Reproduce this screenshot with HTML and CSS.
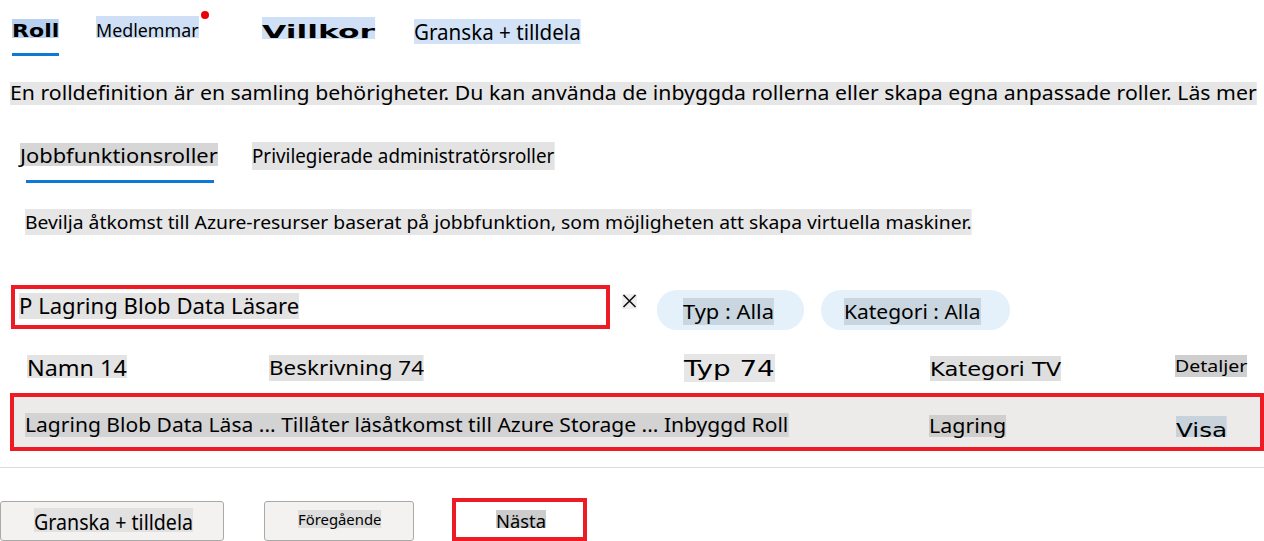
FILE: index.html
```html
<!DOCTYPE html>
<html lang="sv">
<head>
<meta charset="utf-8">
<title>Lägg till rolltilldelning</title>
<link rel="stylesheet" href="styles.css">
</head>
<body>
<main class="page">
  <nav class="tabs">
    <div class="tab tab-active"><span class="hl t-roll">Roll</span></div>
    <div class="tab tab-badge"><span class="hl t-med">Medlemmar</span><span class="dot"></span></div>
    <div class="tab"><span class="hl t-vill">Villkor</span></div>
    <div class="tab"><span class="hl t-gran">Granska + tilldela</span></div>
  </nav>

  <div class="intro"><span class="hl t-intro">En rolldefinition är en samling behörigheter. Du kan använda de inbyggda rollerna eller skapa egna anpassade roller. Läs mer</span></div>

  <div class="subtabs">
    <div class="subtab subtab-active"><span class="hl t-job">Jobbfunktionsroller</span></div>
    <div class="subtab"><span class="hl t-priv">Privilegierade administratörsroller</span></div>
  </div>

  <div class="subdesc"><span class="hl t-bev">Bevilja åtkomst till Azure-resurser baserat på jobbfunktion, som möjligheten att skapa virtuella maskiner.</span></div>

  <div class="filters">
    <div class="search"><span class="hl t-search">P Lagring Blob Data Läsare</span></div>
    <span class="clear" aria-label="Rensa"><svg width="15" height="14" viewBox="0 0 15 14"><path d="M1.5 1 L13.5 13 M13.5 1 L1.5 13" stroke="#111" stroke-width="1.6" fill="none"/></svg></span>
    <div class="pill pill-typ"><span class="hl t-pill">Typ : Alla</span></div>
    <div class="pill pill-kat"><span class="hl t-pill2">Kategori : Alla</span></div>
  </div>

  <div class="thead">
    <span class="hl t-namn">Namn 14</span>
    <span class="hl t-besk">Beskrivning 74</span>
    <span class="hl t-typ74">Typ 74</span>
    <span class="hl t-kattv">Kategori TV</span>
    <span class="hl t-det">Detaljer</span>
  </div>

  <div class="trow">
    <span class="hl t-rowtxt">Lagring Blob Data Läsa ... Tillåter läsåtkomst till Azure Storage ... Inbyggd Roll</span>
    <span class="hl t-lag">Lagring</span>
    <span class="hl t-visa">Visa</span>
  </div>

  <div class="sep"></div>

  <div class="actions">
    <button class="btn btn-review"><span class="hl t-bg">Granska + tilldela</span></button>
    <button class="btn btn-prev"><span class="hl t-bf">Föregående</span></button>
    <button class="btn btn-next"><span class="hl t-bn">Nästa</span></button>
  </div>
</main>
</body>
</html>
```
FILE: styles.css
```css
html, body { margin: 0; padding: 0; background: #fff; }
body {
  font-family: "Noto Sans", sans-serif;
  color: #000;
  width: 1264px;
  height: 541px;
  overflow: hidden;
}
.page { display: flex; flex-direction: column; }

.hl {
  display: block;
  width: max-content;
  white-space: nowrap;
  transform-origin: left top;
  transform: scaleX(var(--sx, 1));
  background: #e6e6e6;
}

/* top tabs */
.tabs {
  display: grid;
  grid-template-columns: 84px 166px 152px 1fr;
  padding-left: 12px;
  height: 60px;
  align-items: start;
}
.tab { display: flex; flex-direction: column; position: relative; }
.t-roll { font-family: "DejaVu Sans", sans-serif; font-weight: bold; font-size: 17px; line-height: 25px; height: 19px; margin-top: 19px; background: #b8d1f1; --sx: 1.30; }
.tab-active::after { content: ""; display: block; width: 47px; height: 3px; margin-top: 15px; background: #0f78d4; }
.t-med { font-size: 18px; line-height: 28px; height: 22px; margin-top: 16px; background: #cfe0f6; --sx: 0.99; }
.dot { position: absolute; left: 105px; top: 11px; width: 8px; height: 8px; border-radius: 50%; background: #e8000b; }
.t-vill { font-family: "DejaVu Sans", sans-serif; font-weight: bold; font-size: 18px; line-height: 29px; height: 22px; margin-top: 17px; background: #cfe0f6; --sx: 1.74; }
.t-gran { font-size: 21px; line-height: 26px; height: 25px; margin-top: 19px; background: #d2e3f7; --sx: 0.98; }

/* intro */
.intro { margin-top: 22px; padding-left: 10px; }
.t-intro { font-size: 20px; line-height: 21px; height: 23px; background: #e6e6e6; --sx: 1.062; }

/* sub tabs */
.subtabs { display: grid; grid-template-columns: 232px 1fr; padding-left: 20px; margin-top: 37px; align-items: start; }
.subtab { display: flex; flex-direction: column; }
.t-job { font-size: 20px; line-height: 26px; height: 23px; margin-top: 1px; background: #d6d6d6; --sx: 1.094; }
.subtab-active::after { content: ""; display: block; width: 188px; height: 3px; margin: 14px 0 0 6px; background: #0f78d4; }
.t-priv { font-size: 20px; line-height: 28px; height: 28px; background: #e3e3e3; --sx: 0.94; }

.subdesc { margin-top: 26px; padding-left: 25px; }
.t-bev { font-size: 18px; line-height: 27px; height: 26px; background: #e6e6e6; --sx: 1.072; }

/* filters */
.filters { display: flex; align-items: flex-start; margin-top: 50px; padding-left: 11px; height: 44px; }
.search {
  box-sizing: border-box;
  width: 599px;
  height: 44px;
  border: 4px solid #ed1c24;
  padding: 4px 0 0 4px;
}
.t-search { font-size: 21px; line-height: 27px; height: 26px; background: #e3e3e3; --sx: 1.053; }
.clear {
  display: flex;
  margin: 9px 0 0 12px;
  width: 15px;
  height: 15px;
  background: #efefef;
}
.pill {
  box-sizing: border-box;
  height: 40px;
  margin-top: 5px;
  border-radius: 20px;
  background: #e4f0fa;
  padding-top: 8px;
}
.pill-typ { width: 147px; margin-left: 20px; padding-left: 26px; }
.pill-kat { width: 189px; margin-left: 17px; padding-left: 23px; }
.t-pill, .t-pill2 { font-size: 19px; line-height: 29px; height: 27px; background: #c9d5df; }
.t-pill { --sx: 1.15; }
.t-pill2 { --sx: 1.105; }

/* table */
.thead {
  display: grid;
  grid-template-columns: 242px 415px 246px 245px 1fr;
  padding-left: 27px;
  margin-top: 25px;
  height: 28px;
  align-items: start;
}
.t-namn { font-size: 21px; line-height: 27px; height: 23px; margin-top: 1px; background: #e3e3e3; --sx: 1.11; }
.t-besk { font-size: 20px; line-height: 25px; height: 26px; margin-top: 1px; background: #e0e0e0; --sx: 1.12; }
.t-typ74 { font-family: "DejaVu Sans", sans-serif; font-size: 21px; line-height: 30px; height: 28px; background: #e6e6e6; --sx: 1.32; }
.t-kattv { font-family: "DejaVu Sans", sans-serif; font-size: 19px; line-height: 27px; height: 25px; margin-top: 2px; background: #dedede; --sx: 1.19; }
.t-det { font-size: 16px; line-height: 22px; height: 22px; margin-top: 1px; background: #cfcfcf; --sx: 1.22; }

.trow {
  box-sizing: border-box;
  display: grid;
  grid-template-columns: 915px 247px 1fr;
  align-items: start;
  margin: 11px 0 0 10px;
  height: 58px;
  border: 4px solid #ed1c24;
  background: #ecebe9;
}
.t-rowtxt { font-size: 20px; line-height: 24px; height: 24px; margin: 16px 0 0 11px; background: #d3d3d3; --sx: 1.052; }
.t-lag { font-size: 20px; line-height: 22px; height: 22px; margin-top: 18px; background: #d0cfcd; --sx: 1.07; }
.t-visa { font-family: "DejaVu Sans", sans-serif; font-size: 19px; line-height: 28px; height: 21px; margin-top: 19px; background: #c8d2db; --sx: 1.30; }

.sep { margin-top: 16px; height: 1px; background: #dcdcdc; }

/* actions */
.actions { display: flex; align-items: flex-end; height: 73px; }
.btn {
  box-sizing: border-box;
  display: flex;
  align-items: flex-start;
  margin: 0;
  font-family: "Noto Sans", sans-serif;
  color: #000;
  cursor: pointer;
}
.btn-review { width: 224px; height: 40px; border: 1px solid #a9a9a9; border-radius: 3px; background: #f3f2f1; padding: 6px 0 0 33px; }
.btn-prev { width: 150px; height: 40px; margin-left: 40px; border: 1px solid #a9a9a9; border-radius: 3px; background: #f3f2f1; padding: 8px 0 0 33px; }
.btn-next { width: 135px; height: 43px; margin-left: 38px; border: 4px solid #ed1c24; background: #fff; padding: 8px 0 0 40px; }
.t-bg { font-size: 21px; line-height: 28px; height: 24px; background: #e1e1e1; --sx: 0.935; }
.t-bf { font-size: 15px; line-height: 18px; height: 18px; background: #dedede; --sx: 0.99; }
.t-bn { font-size: 18px; line-height: 22px; height: 18px; background: #cccccc; --sx: 1.02; }
```
